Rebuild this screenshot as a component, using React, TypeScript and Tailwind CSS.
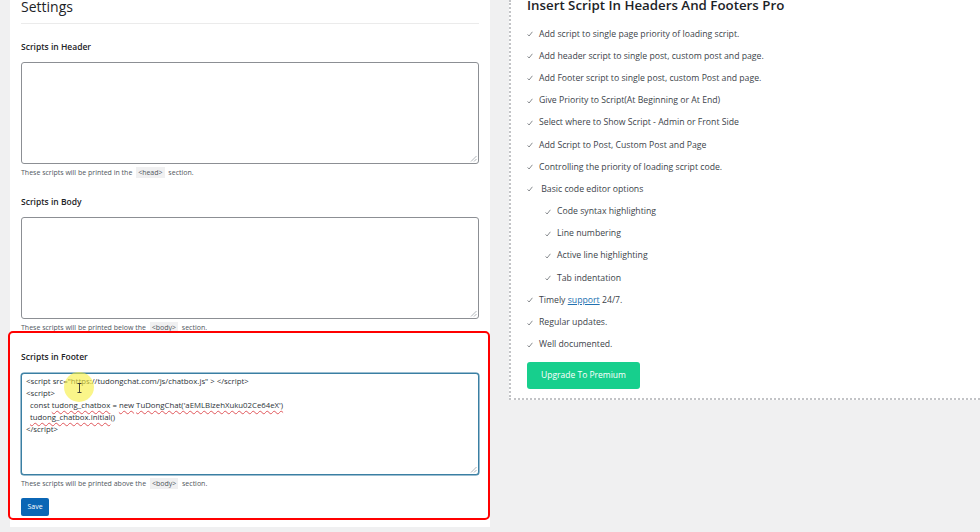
import React from "react";

const features = [
  { text: "Add script to single page priority of loading script." },
  { text: "Add header script to single post, custom post and page." },
  { text: "Add Footer script to single post, custom Post and page." },
  { text: "Give Priority to Script(At Beginning or At End)" },
  { text: "Select where to Show Script - Admin or Front Side" },
  { text: "Add Script to Post, Custom Post and Page" },
  { text: "Controlling the priority of loading script code." },
  { text: " Basic code editor options" },
  { text: "Code syntax highlighting", sub: true },
  { text: "Line numbering", sub: true },
  { text: "Active line highlighting", sub: true },
  { text: "Tab indentation", sub: true },
] as const;

const font = { fontFamily: '"Open Sans", "Noto Sans", sans-serif' };

function Grip() {
  return (
    <svg className="absolute bottom-[1px] right-[1px]" width="7" height="7" viewBox="0 0 7 7">
      <path d="M6.5 1 L1 6.5 M6.5 4 L4 6.5" stroke="#9ca2a8" strokeWidth="0.8" />
    </svg>
  );
}

function Check() {
  return (
    <span className="flex w-[12px] items-center">
      <svg width="6" height="6" viewBox="0 0 6 6">
        <path d="M0.6 3.4 L2.1 5 L5.4 0.8" stroke="#6b7075" strokeWidth="0.8" fill="none" />
      </svg>
    </span>
  );
}

function Code({ children }: { children: React.ReactNode }) {
  return <span className="mx-[2px] bg-[#f0f0f1] px-[2px] py-[1px]">{children}</span>;
}

function Help({ children }: { children: React.ReactNode }) {
  return <p className="mt-[3px] text-[7px] leading-[12px] text-[#50575e]">{children}</p>;
}

function Label({ children }: { children: React.ReactNode }) {
  return <p className="mt-[17px] text-[8.5px] font-semibold leading-[12px] text-[#1d2327]">{children}</p>;
}

function Box({ children, focused }: { children?: React.ReactNode; focused?: boolean }) {
  return (
    <div
      className={`relative mr-[11px] h-[102px] rounded-[3px] border bg-white ${
        focused ? "mt-[10px] border-[#3a7fa3] shadow-[0_0_0_0.5px_#3a7fa3]" : "mt-[9px] border-[#8c8f94]"
      }`}
    >
      {children}
      <Grip />
    </div>
  );
}

function Squig({ children }: { children: React.ReactNode }) {
  return <span className="underline decoration-[#e0565b] decoration-wavy decoration-1 underline-offset-[2px]">{children}</span>;
}

export default function App() {
  return (
    <div className="relative flex h-[532px] w-[980px] items-start overflow-hidden bg-[#f0f0f1]" style={font}>
      {/* settings panel */}
      <div className="ml-[10px] h-[527px] w-[480px] shrink-0 bg-white pl-[11px]">
        <h1 className="-mt-[3px] h-[20px] text-[14px] font-normal leading-[20px] text-[#1d2327]">Settings</h1>
        <div className="mr-[11px] mt-[6px] h-px bg-[#ebebeb]" />

        <Label>Scripts in Header</Label>
        <Box />
        <Help>
          These scripts will be printed in the <Code>&lt;head&gt;</Code> section.
        </Help>

        <Label>Scripts in Body</Label>
        <Box />
        <Help>
          These scripts will be printed below the <Code>&lt;body&gt;</Code> section.
        </Help>

        <Label>Scripts in Footer</Label>
        <Box focused>
          <div className="whitespace-pre px-[4px] pt-[1px] text-[7.8px] leading-[12px] text-[#2c3338]">
            <div>&lt;script src="https://tudongchat.com/js/chatbox.js" &gt; &lt;/script&gt;</div>
            <div>&lt;script&gt;</div>
            <div className="pl-[4px]">
              const <Squig>tudong_chatbox</Squig> = <Squig>new</Squig> <Squig>TuDongChat('aEMLBlzehXuku02Ce64eX')</Squig>
            </div>
            <div className="pl-[4px]">
              <Squig>tudong_chatbox.initial</Squig>()
            </div>
            <div>&lt;/script&gt;</div>
          </div>
          {/* cursor highlight */}
          <div className="pointer-events-none absolute left-[42px] top-[-2px] h-[30px] w-[30px] rounded-full bg-[#f6ee3a]/60" />
          <svg className="absolute left-[55px] top-[9px]" width="5" height="10" viewBox="0 0 5 10">
            <path d="M0.5 0.5 H4.5 M2.5 0.5 V9.5 M0.5 9.5 H4.5" stroke="#333" strokeWidth="0.9" fill="none" />
          </svg>
        </Box>
        <Help>
          These scripts will be printed above the <Code>&lt;body&gt;</Code> section.
        </Help>

        <button className="mt-[8px] h-[18px] w-[28px] rounded-[2px] bg-[#0b66b5] text-[7px] text-white">Save</button>
      </div>

      {/* pro features panel */}
      <div className="ml-[19px] h-[400px] flex-1 border-b-2 border-l-2 border-dotted border-[#c3c4c7] bg-white pl-[16px]">
        <h2 className="-mt-[5px] h-[20px] text-[13.3px] font-semibold leading-[20px] text-[#1d2327]">
          Insert Script In Headers And Footers Pro
        </h2>
        <ul className="mt-[8px] text-[8.7px] text-[#3c434a]">
          {features.map((f) => (
            <li key={f.text} className={`flex h-[22.2px] items-center ${f.sub ? "pl-[18px]" : ""}`}>
              <Check />
              <span className="whitespace-pre">{f.text}</span>
            </li>
          ))}
          <li className="flex h-[22.2px] items-center">
            <Check />
            <span>
              Timely <a className="text-[#2271b1] underline">support</a> 24/7.
            </span>
          </li>
          <li className="flex h-[22.2px] items-center">
            <Check />
            <span>Regular updates.</span>
          </li>
          <li className="flex h-[22.2px] items-center">
            <Check />
            <span>Well documented.</span>
          </li>
        </ul>
        <button className="mt-[6px] h-[27px] w-[113px] rounded-[3px] bg-[#17cf8d] text-[8.5px] text-white">
          Upgrade To Premium
        </button>
      </div>

      {/* annotation outline */}
      <div className="pointer-events-none absolute left-[8px] top-[331px] h-[189px] w-[482px] rounded-[5px] border-2 border-[#ff0000]" />
    </div>
  );
}
